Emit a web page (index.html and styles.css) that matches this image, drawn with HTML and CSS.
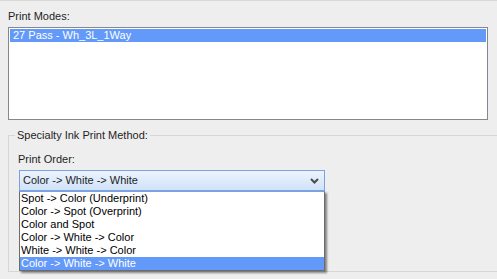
FILE: index.html
```html
<!DOCTYPE html>
<html>
<head>
<meta charset="utf-8">
<link rel="stylesheet" href="styles.css">
</head>
<body>
<div class="pane">
  <div class="label">Print Modes:</div>
  <div class="listbox">
    <div class="row selected">27 Pass - Wh_3L_1Way</div>
  </div>
  <fieldset class="group">
    <legend class="legend">Specialty Ink Print Method:</legend>
    <div class="group-body">
      <div class="label order-label">Print Order:</div>
      <div class="combo-wrap">
        <div class="combo">
          <span class="combo-text">Color -&gt; White -&gt; White</span>
          <svg class="chevron" width="9" height="6" viewBox="0 0 9 6">
            <polyline points="1,1 4.5,4.5 8,1" fill="none" stroke="#4a4a4a" stroke-width="2"/>
          </svg>
        </div>
        <div class="dropdown">
          <div class="item">Spot -&gt; Color (Underprint)</div>
          <div class="item">Color -&gt; Spot (Overprint)</div>
          <div class="item">Color and Spot</div>
          <div class="item">Color -&gt; White -&gt; Color</div>
          <div class="item">White -&gt; White -&gt; Color</div>
          <div class="item selected">Color -&gt; White -&gt; White</div>
        </div>
      </div>
    </div>
  </fieldset>
</div>
</body>
</html>
```

FILE: styles.css
```css
html, body {
  margin: 0;
  padding: 0;
}
body {
  width: 497px;
  height: 279px;
  overflow: hidden;
  background: #eeeeee;
  border-top: 1px solid #d8d8d8;
  box-sizing: border-box;
  font-family: "Liberation Sans", Tahoma, Arial, sans-serif;
  font-size: 11px;
  color: #1e1e1e;
}
.pane {
  padding: 9px 0 0 8px;
}
.label {
  line-height: 13px;
  height: 13px;
  margin-bottom: 4px;
}
.listbox {
  width: 480px;
  height: 93px;
  box-sizing: border-box;
  border: 1px solid #828790;
  background: #ffffff;
  padding: 1px;
}
.row {
  height: 13px;
  line-height: 13px;
  padding-left: 3px;
}
.selected {
  background: #6399f8;
  color: #ffffff;
}
.group {
  margin: 9px 0 0 0;
  padding: 0 0 0 6px;
  width: 500px;
  height: 143px;
  box-sizing: border-box;
  border: 1px solid #d6d6d6;
  min-width: 0;
}
.legend {
  padding: 0 2px;
  line-height: 13px;
}
.group-body {
  padding: 11px 0 0 4px;
}
.order-label {
  margin-left: -1px;
}
.combo-wrap {
  position: relative;
  width: 306px;
}
.combo {
  height: 21px;
  box-sizing: border-box;
  border: 1px solid #7ba2e0;
  background: linear-gradient(#ecf4fd, #d0e2f9);
  display: flex;
  align-items: center;
  justify-content: space-between;
  padding: 0 5px 0 3px;
}
.combo-text {
  line-height: 13px;
}
.chevron {
  display: block;
}
.dropdown {
  position: absolute;
  left: 0;
  top: 21px;
  width: 306px;
  box-sizing: border-box;
  border: 1px solid #6c6c6c;
  border-top-color: #7ba2e0;
  background: #ffffff;
  box-shadow: 2px 2px 2px rgba(0, 0, 0, 0.45);
}
.item {
  height: 13px;
  line-height: 13px;
  padding-left: 1px;
  color: #000000;
}
.item.selected {
  color: #ffffff;
}
```
